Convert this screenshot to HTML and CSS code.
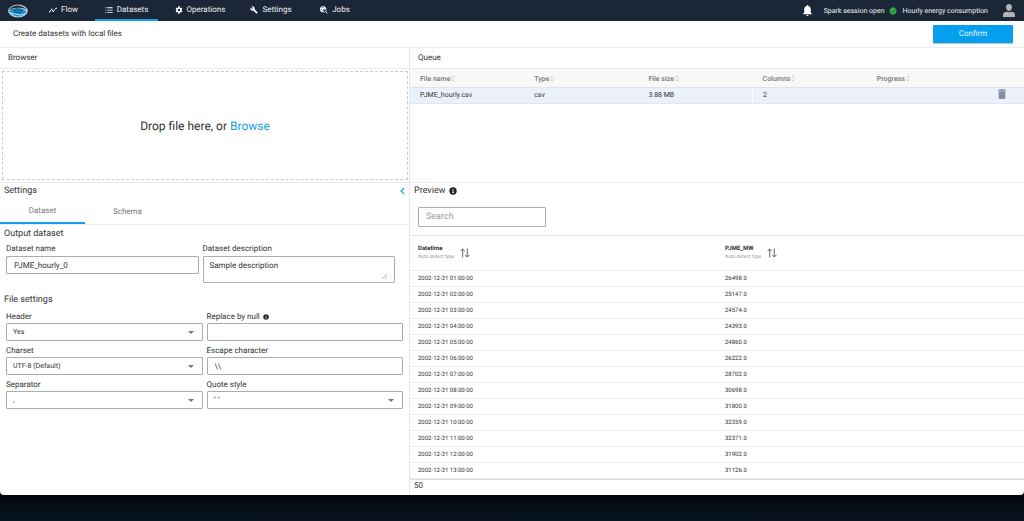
FILE: index.html
```html
<!DOCTYPE html>
<html lang="en">
<head>
<meta charset="utf-8">
<title>Create datasets</title>
<link rel="stylesheet" href="styles.css">
</head>
<body>
<svg class="defs" aria-hidden="true">
  <symbol id="sort" viewBox="0 0 4 8"><path d="M.5 3 2 1l1.500 2M.5 5 2 7l1.500-2" fill="none" stroke="#b5b5b5" stroke-width=".7"/></symbol>
  <symbol id="arrows" viewBox="0 0 10 10"><path d="M2.700 9.500V1M.5 3.200 2.700 1l2.200 2.200M7.300.5V9M5.100 6.800 7.300 9l2.200-2.200" fill="none" stroke="#555" stroke-width=".9"/></symbol>
  <symbol id="info" viewBox="0 0 24 24"><circle cx="12" cy="12" r="11" fill="#222"/><path d="M10.500 6h3v3h-3zM9.500 10.500h4V16H15v2H9.500v-2H11v-3.500H9.500z" fill="#fff"/></symbol>
  <symbol id="caret" viewBox="0 0 6 3"><path d="M0 0h6L3 3z" fill="#777"/></symbol>
</svg>
<div class="window">
  <header class="topbar">
    <a class="logo" href="#" aria-label="Home">
      <svg viewBox="0 0 20 14"><ellipse cx="10" cy="7" rx="9.800" ry="6.500" fill="#c9d6de"/><path d="M1 6.500C3 2 8 1 12 1.800c3 .5 6 2.500 7 5-1-1.800-4-3-8-3S3 4.500 1 6.500z" fill="#26313c"/><path d="M1 7.500C3 4.500 7 3.600 11 4s6 2 7.500 4c-2 3.500-6 4.800-9.500 4.400S2.500 10 1 7.500z" fill="#1996d4"/><path d="M5 5.200l2 2 1.500-2.400 1.500 2.500 2-2.300 1 2.500 2-1M6 8.500h7" fill="none" stroke="#173247" stroke-width=".8"/><path d="M1.500 8.500c3 1.800 7 1.200 9 2.200 2 .8 5 .2 7-1.700" fill="none" stroke="#e8f1f6" stroke-width=".8"/></svg>
    </a>
    <nav class="nav">
      <a class="nav-link flow" href="#"><svg class="icon" viewBox="0 0 24 24"><path d="M1.500 17.500l6-7 5 5L21 7" fill="none" stroke="#fff" stroke-width="2.400"/><circle cx="2.500" cy="17" r="2.200"/><circle cx="8" cy="10" r="2.200"/><circle cx="13" cy="15.500" r="2.200"/><circle cx="21.500" cy="7" r="2.200"/></svg>Flow</a>
      <a class="nav-link datasets active" href="#"><svg class="icon" viewBox="0 0 24 24"><path d="M1 4h3v2.500H1zM1 11h3v2.500H1zM1 18h3v2.500H1zM7 4h16v2.500H7zM7 11h16v2.500H7zM7 18h16v2.500H7z"/></svg>Datasets</a>
      <a class="nav-link operations" href="#"><svg class="icon" viewBox="0 0 24 24"><path fill-rule="evenodd" d="M19.400 13c0-.3.100-.6.100-1s0-.7-.1-1l2.600-2-2.500-4.300-3 1.200c-.5-.4-1.100-.7-1.700-1L14.300 1H9.700l-.5 3.900c-.6.300-1.200.6-1.700 1l-3-1.200L2 9l2.600 2a8 8 0 0 0 0 2L2 15l2.500 4.300 3-1.200c.5.400 1.100.7 1.700 1l.5 3.900h4.600l.5-3.900c.6-.3 1.200-.6 1.700-1l3 1.200L22 15zM12 15.600a3.600 3.600 0 1 1 0-7.200 3.600 3.600 0 0 1 0 7.200z"/></svg>Operations</a>
      <a class="nav-link settings-link" href="#"><svg class="icon" viewBox="0 0 24 24"><path d="M22.700 19l-9.100-9.100c.9-2.300.4-5-1.500-6.900-2-2-5-2.400-7.400-1.300L9 6 6 9 1.600 4.700C.4 7.100.9 10.100 2.900 12.100c1.900 1.900 4.600 2.400 6.900 1.500l9.100 9.100c.4.400 1 .4 1.400 0l2.300-2.300c.5-.4.500-1.100.1-1.400z"/></svg>Settings</a>
      <a class="nav-link jobs" href="#"><svg class="icon" viewBox="0 0 24 24"><path fill-rule="evenodd" d="M10 1a9 9 0 0 1 8.800 11c-.8-2.500-3-4-5.300-4A5.600 5.600 0 0 0 8 13.600c0 2.200 1.200 4 3 5A9 9 0 1 1 10 1zM5 6l3 1 3-3-4-.5zM3 10l3 4v-4z"/><circle cx="14" cy="14" r="4.500" fill="none" stroke="#fff" stroke-width="2"/><path d="M17 17l5.500 5.500" stroke="#fff" stroke-width="2.400"/></svg>Jobs</a>
    </nav>
    <div class="session">
      <button class="icon-button bell" aria-label="Notifications"><svg viewBox="0 0 16 20"><path d="M8 0c1 0 1.500.7 1.500 1.600C12.500 2.400 14 5 14 8v6l2 2v1H0v-1l2-2V8c0-3 1.500-5.600 4.500-6.400C6.500.7 7 0 8 0zM6 18h4c0 1.200-.9 2-2 2s-2-.8-2-2z" fill="#fff"/></svg></button>
      <span>Spark session open</span>
      <svg class="check" viewBox="0 0 24 24"><path d="M12 0l3 2.200 3.700.1 1 3.500 3 2.200L21.500 12l1.200 3.700-3 2.200-1 3.600-3.700.1L12 24l-3-2.400-3.700-.1-1-3.600-3-2.200L2.500 12 1.300 8l3-2.200 1-3.500L9 2.200z" fill="#2fae4a"/><path d="M7 12l3.700 3.700L17.500 9" fill="none" stroke="#16402a" stroke-width="2.600"/></svg>
      <span>Hourly energy consumption</span>
      <button class="icon-button user" aria-label="Account"><svg viewBox="0 0 24 26"><path d="M12 0c3.800 0 6 2.800 6 6.500S15.500 14 12 14 6 10.200 6 6.500 8.200 0 12 0zM0 26v-5c0-3.500 4-5 8-5.500 2.500 1.300 5.500 1.300 8 0 4 .5 8 2 8 5.500v5z" fill="#b3b3b3"/></svg></button>
    </div>
  </header>

  <div class="titlebar">
    <h1>Create datasets with local files</h1>
    <button class="confirm">Confirm</button>
  </div>

  <main class="panels">
    <section class="panel browser">
      <h2 class="panel-title">Browser</h2>
      <div class="dropzone"><p>Drop file here, or <a href="#">Browse</a></p></div>
    </section>

    <section class="panel queue">
      <h2 class="panel-title">Queue</h2>
      <table class="queue-table">
        <thead><tr>
          <th>File name<svg class="sort"><use href="#sort"/></svg></th>
          <th>Type<svg class="sort"><use href="#sort"/></svg></th>
          <th>File size<svg class="sort"><use href="#sort"/></svg></th>
          <th>Columns<svg class="sort"><use href="#sort"/></svg></th>
          <th>Progress<svg class="sort"><use href="#sort"/></svg></th>
          <th class="action"></th>
        </tr></thead>
        <tbody><tr>
          <td>PJME_hourly.csv</td><td>csv</td><td>3.88 MB</td><td class="split">2</td><td></td>
          <td class="action"><button class="icon-button trash" aria-label="Remove file"><svg viewBox="0 0 14 18"><path d="M1 4h12v12a2 2 0 0 1-2 2H3a2 2 0 0 1-2-2zM0 1h4l1-1h4l1 1h4v2H0z" fill="#858da5"/></svg></button></td>
        </tr></tbody>
      </table>
    </section>

    <section class="panel settings">
      <div class="settings-head">
        <h2>Settings</h2>
        <button class="icon-button collapse" aria-label="Collapse"><svg viewBox="0 0 5 8"><path d="M4.200.8 1 4l3.200 3.200" fill="none" stroke="#0aa0f0" stroke-width="1.200"/></svg></button>
      </div>
      <div class="tabs" role="tablist">
        <button class="tab selected" role="tab" aria-selected="true">Dataset</button>
        <button class="tab" role="tab" aria-selected="false">Schema</button>
      </div>
      <form class="form">
        <h3>Output dataset</h3>
        <div class="row output">
          <div class="field"><label for="name">Dataset name</label><input id="name" type="text" value="PJME_hourly_0"></div>
          <div class="field"><label for="desc">Dataset description</label>
            <div class="area"><textarea id="desc">Sample description</textarea><svg class="grip" viewBox="0 0 5 5"><path d="M0 5 5 0M2.500 5 5 2.500" stroke="#888" stroke-width=".6"/></svg></div></div>
        </div>
        <h3>File settings</h3>
        <div class="row file">
          <div class="field"><label for="header">Header</label><div class="select"><select id="header"><option>Yes</option></select><svg class="caret"><use href="#caret"/></svg></div></div>
          <div class="field"><label for="null">Replace by null <svg class="info-small"><use href="#info"/></svg></label><input id="null" type="text"></div>
          <div class="field"><label for="charset">Charset</label><div class="select"><select id="charset"><option>UTF-8 (Default)</option></select><svg class="caret"><use href="#caret"/></svg></div></div>
          <div class="field"><label for="escape">Escape character</label><input id="escape" type="text" value="\\"></div>
          <div class="field"><label for="sep">Separator</label><div class="select"><select id="sep"><option>,</option></select><svg class="caret"><use href="#caret"/></svg></div></div>
          <div class="field"><label for="quote">Quote style</label><div class="select"><select id="quote"><option>" "</option></select><svg class="caret"><use href="#caret"/></svg></div></div>
        </div>
      </form>
    </section>

    <section class="panel preview">
      <h2>Preview <svg class="info"><use href="#info"/></svg></h2>
      <div class="search"><input type="text" placeholder="Search" aria-label="Search"></div>
      <table class="preview-table">
        <thead><tr>
          <th><div class="column-head"><div>Datetime<small>Auto detect type</small></div><svg class="arrows"><use href="#arrows"/></svg></div></th>
          <th><div class="column-head"><div>PJME_MW<small>Auto detect type</small></div><svg class="arrows"><use href="#arrows"/></svg></div></th>
        </tr></thead>
        <tbody>
          <tr><td>2002-12-31 01:00:00</td><td>26498.0</td></tr>
          <tr><td>2002-12-31 02:00:00</td><td>25147.0</td></tr>
          <tr><td>2002-12-31 03:00:00</td><td>24574.0</td></tr>
          <tr><td>2002-12-31 04:00:00</td><td>24393.0</td></tr>
          <tr><td>2002-12-31 05:00:00</td><td>24860.0</td></tr>
          <tr><td>2002-12-31 06:00:00</td><td>26222.0</td></tr>
          <tr><td>2002-12-31 07:00:00</td><td>28702.0</td></tr>
          <tr><td>2002-12-31 08:00:00</td><td>30698.0</td></tr>
          <tr><td>2002-12-31 09:00:00</td><td>31800.0</td></tr>
          <tr><td>2002-12-31 10:00:00</td><td>32359.0</td></tr>
          <tr><td>2002-12-31 11:00:00</td><td>32371.0</td></tr>
          <tr><td>2002-12-31 12:00:00</td><td>31902.0</td></tr>
          <tr><td>2002-12-31 13:00:00</td><td>31126.0</td></tr>
        </tbody>
      </table>
      <footer class="count">50</footer>
    </section>
  </main>
</div>
</body>
</html>
```
FILE: styles.css
```css
* { box-sizing: border-box; }
body {
  margin: 0;
  min-height: 100vh;
  padding-bottom: 26px;
  display: flex;
  flex-direction: column;
  background: linear-gradient(#03060a, #07131f) bottom / 100% 32px no-repeat #07111b;
  font: 8px/12px Roboto, sans-serif;
  text-rendering: geometricPrecision;
  color: #333;
}
h1, h2, h3, p { margin: 0; font-weight: 400; }
h2, h3 { font-size: 9px; }
a { color: inherit; text-decoration: none; }
button, input, select, textarea { font: inherit; color: inherit; margin: 0; text-rendering: inherit; }
svg { display: block; }
.defs { position: absolute; width: 0; height: 0; }
.icon-button { border: 0; padding: 0; background: none; }

.window {
  flex: 1;
  display: flex;
  flex-direction: column;
  background: #fff;
  border-radius: 0 0 4px 4px;
  overflow: hidden;
}

.topbar { display: flex; align-items: center; height: 21px; background: #1b2636; color: #f0f2f4; }
.logo { margin-left: 8px; }
.logo svg { width: 20px; height: 14px; }
.nav { display: flex; align-self: stretch; margin-left: 4px; }
.nav-link {
  display: flex;
  align-items: center;
  justify-content: center;
  gap: 4px;
  width: 63px;
  border-bottom: 2px solid transparent;
  padding-top: 1px;
}
.nav-link.operations { width: 84px; }
.nav-link.settings-link { width: 58px; }
.nav-link.jobs { width: 70px; }
.nav-link.active { border-color: #12a0ee; }
.icon { width: 8px; height: 8px; fill: #fff; }
.session { display: flex; align-items: center; margin-left: auto; padding-right: 9px; font-size: 7px; }
.bell { margin-right: 12px; }
.bell svg { width: 9px; height: 11px; }
.check { width: 8px; height: 8px; margin: 0 6px 0 4px; }
.user { margin-left: 15px; }
.user svg { width: 12px; height: 13px; }

.titlebar {
  display: flex;
  align-items: center;
  justify-content: space-between;
  height: 27px;
  padding: 0 11px 0 13px;
  border-bottom: 1px solid #ececec;
}
.titlebar h1 { font-size: 8px; }
.confirm { width: 80px; height: 18px; border: 0; border-radius: 1px; background: #059ff0; color: #e8f6ff; box-shadow: 0 1px 1px #bbb; }

.panels { flex: 1; display: grid; grid-template-columns: 409fr 615fr; grid-template-rows: 135px 1fr; }
.panel { min-width: 0; border-bottom: 1px solid #ececec; }
.queue, .preview { border-left: 1px solid #e6e6e6; }
.settings, .preview { border-bottom: 0; }
.panel-title { height: 21px; padding: 4px 8px; font-size: 8px; border-bottom: 1px solid #ececec; }

.browser { display: flex; flex-direction: column; }
.dropzone {
  flex: 1;
  display: grid;
  place-items: center;
  margin: 2px 1px 2px 2px;
  border: 1px dashed #ccc;
  font-size: 12px;
}
.dropzone a { color: #159fe6; }

table { width: 100%; border-collapse: collapse; table-layout: fixed; }
th, td { text-align: left; padding: 0; }
.queue-table { font-size: 7px; line-height: 8px; }
.queue-table th { height: 18px; padding: 2px 0 0 10px; background: #f8f8f8; color: #777; font-weight: 500; border-bottom: 1px solid #e2e2e2; }
.queue-table td { height: 16px; padding: 0 0 1px 10px; background: #eaf1fc; border-bottom: 1px solid #e2e6ee; }
.queue-table td.split { border-left: 1px solid #fff; }
.queue-table .action { width: 43px; padding-left: 17px; }
.sort { display: inline-block; width: 4px; height: 7px; margin-left: 1px; vertical-align: middle; }
.trash svg { width: 8px; height: 10px; }

.settings-head { display: flex; align-items: center; justify-content: space-between; height: 15px; padding: 0 4px; }
.collapse svg { width: 5px; height: 8px; }
.tabs { display: flex; height: 27px; border-bottom: 1px solid #ececec; }
.tab { width: 85px; border: 0; border-bottom: 1px solid transparent; background: none; padding: 2px 0 0; color: #777; }
.tab.selected { border-bottom: 2px solid #12a0ee; }

.form { padding: 3px 6px; }
.form h3 { margin-left: -2px; line-height: 12px; }
.row { display: grid; grid-template-columns: 1fr 1fr; gap: 4px; }
.row.output { padding: 3px 8px 11px 0; }
.row.file { padding-top: 5px; }
.field { display: flex; flex-direction: column; }
.field label { display: flex; align-items: center; gap: 3px; line-height: 12px; }
.output .field { gap: 1px; }
.field input, .field select, .field textarea {
  width: 100%;
  height: 18px;
  padding: 0 7px;
  border: 1px solid #a9adb0;
  border-radius: 1px;
  background: #fff;
}
.field textarea { display: block; height: 27px; padding: 3px 6px; resize: none; }
.area, .select { display: grid; }
.area > *, .select > * { grid-area: 1 / 1; }
.grip { width: 5px; height: 5px; place-self: end; margin: 0 8px 4px 0; }
.select { align-items: center; }
.select select { appearance: none; font-size: 7px; padding: 0 6px; }
.caret { justify-self: end; width: 6px; height: 3px; margin-right: 9px; pointer-events: none; }
.info-small { width: 6px; height: 6px; }

.preview { display: flex; flex-direction: column; }
.preview h2 { display: flex; align-items: center; gap: 4px; height: 15px; padding-left: 4px; }
.info { width: 8px; height: 8px; }
.search { padding: 9px 8px 8px; border-bottom: 1px solid #e6e6e6; }
.search input { display: block; width: 128px; height: 20px; padding: 0 7px; border: 1px solid #a9adb0; border-radius: 1px; font-size: 9px; }
.search input::placeholder { color: #999; }
.preview-table { font-size: 6px; line-height: 8px; }
.preview-table th { height: 34px; padding: 1px 0 0 8px; font-weight: 700; border-bottom: 1px solid #ececec; }
.preview-table td { height: 16px; padding: 1px 0 0 8px; border-bottom: 1px solid #ececec; }
.column-head { display: flex; align-items: center; gap: 6px; }
.column-head small { display: block; font-size: 5px; font-weight: 400; color: #999; }
.arrows { width: 10px; height: 10px; }
.count { flex: 1; padding-left: 4px; border-top: 1px solid #ddd; font-size: 8px; }
```
